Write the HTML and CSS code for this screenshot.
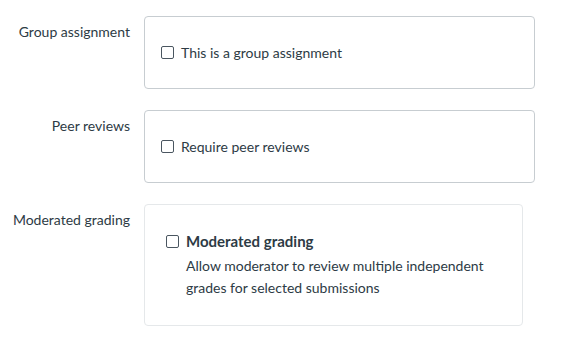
FILE: index.html
```html
<!DOCTYPE html>
<html>

<head>
    <link rel="stylesheet" href="styles.css">
</head>

<body>

    <div class="form-rows">

        <div class="form-row">
            <div class="row-label">Group assignment</div>
            <div class="row-box">
                <label class="check-line">
                    <span class="check-box"></span>
                    This is a group assignment
                </label>
            </div>
        </div>

        <div class="form-row">
            <div class="row-label">Peer reviews</div>
            <div class="row-box">
                <label class="check-line">
                    <span class="check-box"></span>
                    Require peer reviews
                </label>
            </div>
        </div>

        <div class="form-row">
            <div class="row-label">Moderated grading</div>
            <div class="row-box light">
                <label class="check-line strong">
                    <span class="check-box"></span>
                    Moderated grading
                </label>
                <p class="check-help">Allow moderator to review multiple independent grades for selected submissions</p>
            </div>
        </div>

    </div>

</body>

</html>
```

FILE: styles.css
```css
body {
    font-family: Lato, "Open Sans", sans-serif;
    margin: 0;
    background-color: #fff;
    color: #2d3b45;
}

.form-rows {
    padding-top: 16px;
    display: flex;
    flex-direction: column;
    gap: 21px;
}

.form-row {
    display: grid;
    grid-template-columns: 130px auto;
    column-gap: 14px;
    align-items: start;
}

.row-label {
    text-align: right;
    font-size: 14px;
    line-height: 21px;
    padding-top: 5px;
}

.row-box {
    width: 391px;
    box-sizing: border-box;
    border: 1px solid #c7cdd1;
    border-radius: 4px;
    padding: 25px 16px;
}

.row-box.light {
    width: 379px;
    border-color: #e5e8ea;
    padding: 25px 21px 26px;
}

.check-line {
    display: flex;
    align-items: center;
    gap: 7px;
    font-size: 14px;
    line-height: 21px;
}

.check-line.strong {
    font-size: 15px;
    font-weight: bold;
    line-height: 22px;
}

.check-box {
    width: 11px;
    height: 11px;
    border: 1px solid #4a5660;
    border-radius: 2px;
    flex-shrink: 0;
}

.check-help {
    margin: 3px 0 0 20px;
    font-size: 14px;
    line-height: 22px;
}
```
